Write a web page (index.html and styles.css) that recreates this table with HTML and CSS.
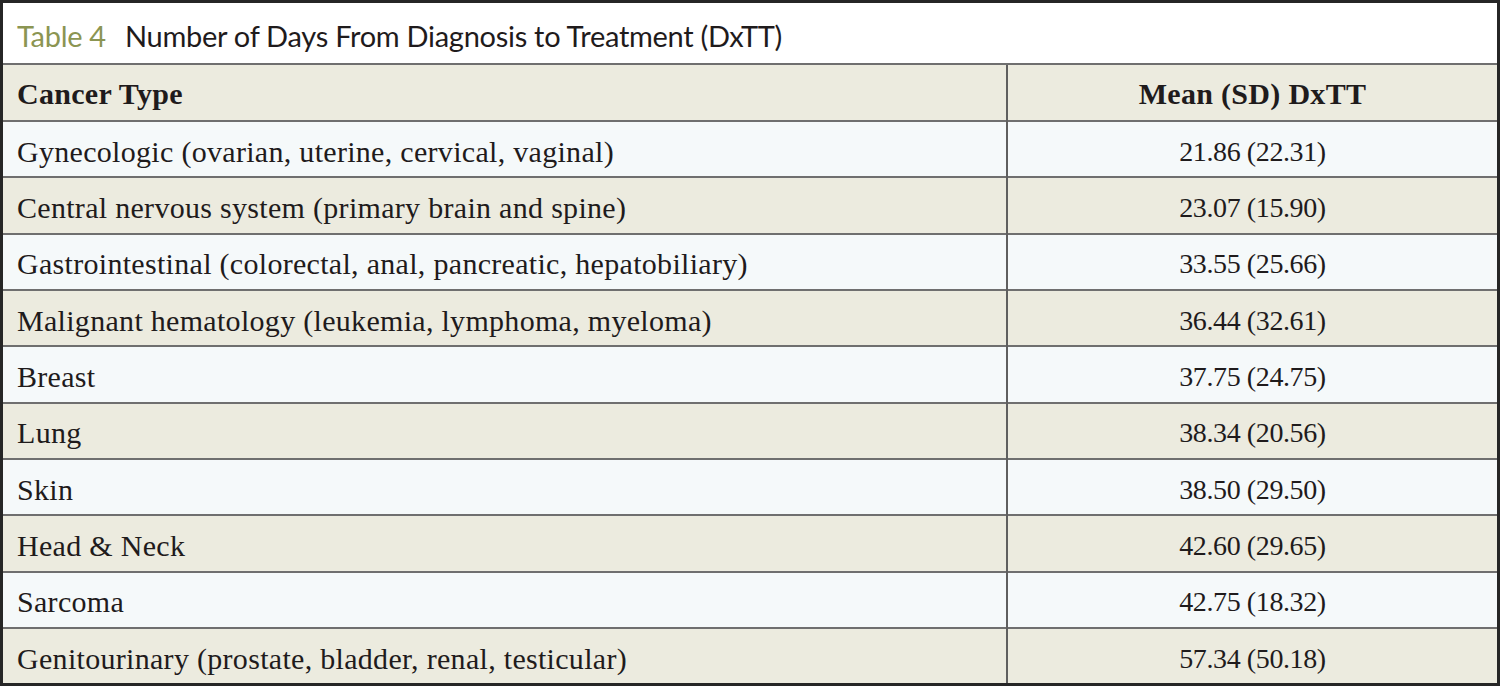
FILE: index.html
```html
<!DOCTYPE html>
<html>
<head>
<meta charset="utf-8">
<link rel="stylesheet" href="styles.css">
</head>
<body>
<div class="frame">
  <div class="title"><span class="label">Table 4</span><span class="caption">Number of Days From Diagnosis to Treatment (DxTT)</span></div>
  <table class="data">
    <thead>
      <tr class="head"><th class="c1">Cancer Type</th><th class="c2">Mean (SD) DxTT</th></tr>
    </thead>
    <tbody>
      <tr class="light"><td class="c1">Gynecologic (ovarian, uterine, cervical, vaginal)</td><td class="c2">21.86 (22.31)</td></tr>
      <tr class="beige"><td class="c1">Central nervous system (primary brain and spine)</td><td class="c2">23.07 (15.90)</td></tr>
      <tr class="light"><td class="c1">Gastrointestinal (colorectal, anal, pancreatic, hepatobiliary)</td><td class="c2">33.55 (25.66)</td></tr>
      <tr class="beige"><td class="c1">Malignant hematology (leukemia, lymphoma, myeloma)</td><td class="c2">36.44 (32.61)</td></tr>
      <tr class="light"><td class="c1">Breast</td><td class="c2">37.75 (24.75)</td></tr>
      <tr class="beige"><td class="c1">Lung</td><td class="c2">38.34 (20.56)</td></tr>
      <tr class="light"><td class="c1">Skin</td><td class="c2">38.50 (29.50)</td></tr>
      <tr class="beige"><td class="c1">Head &amp; Neck</td><td class="c2">42.60 (29.65)</td></tr>
      <tr class="light"><td class="c1">Sarcoma</td><td class="c2">42.75 (18.32)</td></tr>
      <tr class="beige"><td class="c1">Genitourinary (prostate, bladder, renal, testicular)</td><td class="c2">57.34 (50.18)</td></tr>
    </tbody>
  </table>
</div>
</body>
</html>
```
FILE: styles.css
```css
html, body {
  margin: 0;
  padding: 0;
  background: #ffffff;
}
.frame {
  width: 1500px;
  height: 686px;
  box-sizing: border-box;
  border: 3px solid #262626;
  background: #ecebdf;
  overflow: hidden;
}
.title {
  height: 62px;
  box-sizing: border-box;
  background: #ffffff;
  border-bottom: 2px solid #6f6f6f;
  display: flex;
  align-items: center;
  padding: 4px 0 0 14px;
  font-family: "Lato", "Open Sans", sans-serif;
  font-size: 29px;
  letter-spacing: -0.28px;
  color: #1f1b1c;
}
.label {
  color: #8b9552;
  margin-right: 19px;
}
.data {
  width: 100%;
  border-collapse: collapse;
  font-family: "Liberation Serif", "DejaVu Serif", serif;
  font-size: 30px;
  letter-spacing: 0.3px;
  color: #1f1b1c;
}
.data tbody tr {
  height: 56.35px;
}
.data td, .data th {
  padding: 5px 14px 0 14px;
  border-top: 2px solid #6f6f6f;
  vertical-align: middle;
}
.data thead th {
  border-top: none;
  height: 56px;
  padding-top: 3px;
  font-weight: bold;
  box-sizing: border-box;
}
.data td.c2 {
  font-size: 28px;
  letter-spacing: -0.4px;
}
.c1 {
  text-align: left;
  width: 975px;
  border-right: 2px solid #5f5f5f;
}
.c2 {
  text-align: center;
}
.head {
  background: #ecebdf;
}
.light {
  background: #f5f9fa;
}
.beige {
  background: #ecebdf;
}
```
